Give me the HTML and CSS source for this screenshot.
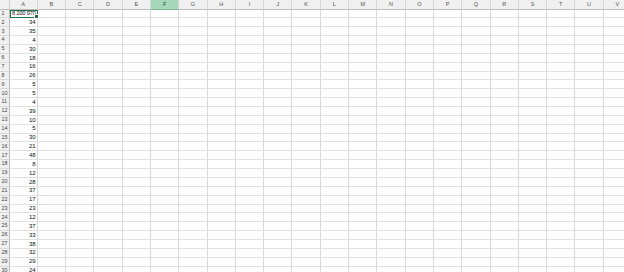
FILE: index.html
```html
<!DOCTYPE html>
<html>
<head>
<meta charset="utf-8">
<link rel="stylesheet" href="styles.css">
</head>
<body>
<div class="sheet">
<b class="corner"></b><b class="ch">A</b><b class="ch">B</b><b class="ch">C</b><b class="ch">D</b><b class="ch">E</b><b class="ch on">F</b><b class="ch">G</b><b class="ch">H</b><b class="ch">I</b><b class="ch">J</b><b class="ch">K</b><b class="ch">L</b><b class="ch">M</b><b class="ch">N</b><b class="ch">O</b><b class="ch">P</b><b class="ch">Q</b><b class="ch">R</b><b class="ch">S</b><b class="ch">T</b><b class="ch">U</b><b class="ch">V</b>
<b class="rh">1</b><span class="n sel">8 200 970</span><span></span><span></span><span></span><span></span><span></span><span></span><span></span><span></span><span></span><span></span><span></span><span></span><span></span><span></span><span></span><span></span><span></span><span></span><span></span><span></span><span></span>
<b class="rh">2</b><span class="n">34</span><span></span><span></span><span></span><span></span><span></span><span></span><span></span><span></span><span></span><span></span><span></span><span></span><span></span><span></span><span></span><span></span><span></span><span></span><span></span><span></span><span></span>
<b class="rh">3</b><span class="n">35</span><span></span><span></span><span></span><span></span><span></span><span></span><span></span><span></span><span></span><span></span><span></span><span></span><span></span><span></span><span></span><span></span><span></span><span></span><span></span><span></span><span></span>
<b class="rh">4</b><span class="n">4</span><span></span><span></span><span></span><span></span><span></span><span></span><span></span><span></span><span></span><span></span><span></span><span></span><span></span><span></span><span></span><span></span><span></span><span></span><span></span><span></span><span></span>
<b class="rh">5</b><span class="n">30</span><span></span><span></span><span></span><span></span><span></span><span></span><span></span><span></span><span></span><span></span><span></span><span></span><span></span><span></span><span></span><span></span><span></span><span></span><span></span><span></span><span></span>
<b class="rh">6</b><span class="n">18</span><span></span><span></span><span></span><span></span><span></span><span></span><span></span><span></span><span></span><span></span><span></span><span></span><span></span><span></span><span></span><span></span><span></span><span></span><span></span><span></span><span></span>
<b class="rh">7</b><span class="n">16</span><span></span><span></span><span></span><span></span><span></span><span></span><span></span><span></span><span></span><span></span><span></span><span></span><span></span><span></span><span></span><span></span><span></span><span></span><span></span><span></span><span></span>
<b class="rh">8</b><span class="n">26</span><span></span><span></span><span></span><span></span><span></span><span></span><span></span><span></span><span></span><span></span><span></span><span></span><span></span><span></span><span></span><span></span><span></span><span></span><span></span><span></span><span></span>
<b class="rh">9</b><span class="n">5</span><span></span><span></span><span></span><span></span><span></span><span></span><span></span><span></span><span></span><span></span><span></span><span></span><span></span><span></span><span></span><span></span><span></span><span></span><span></span><span></span><span></span>
<b class="rh">10</b><span class="n">5</span><span></span><span></span><span></span><span></span><span></span><span></span><span></span><span></span><span></span><span></span><span></span><span></span><span></span><span></span><span></span><span></span><span></span><span></span><span></span><span></span><span></span>
<b class="rh">11</b><span class="n">4</span><span></span><span></span><span></span><span></span><span></span><span></span><span></span><span></span><span></span><span></span><span></span><span></span><span></span><span></span><span></span><span></span><span></span><span></span><span></span><span></span><span></span>
<b class="rh">12</b><span class="n">39</span><span></span><span></span><span></span><span></span><span></span><span></span><span></span><span></span><span></span><span></span><span></span><span></span><span></span><span></span><span></span><span></span><span></span><span></span><span></span><span></span><span></span>
<b class="rh">13</b><span class="n">10</span><span></span><span></span><span></span><span></span><span></span><span></span><span></span><span></span><span></span><span></span><span></span><span></span><span></span><span></span><span></span><span></span><span></span><span></span><span></span><span></span><span></span>
<b class="rh">14</b><span class="n">5</span><span></span><span></span><span></span><span></span><span></span><span></span><span></span><span></span><span></span><span></span><span></span><span></span><span></span><span></span><span></span><span></span><span></span><span></span><span></span><span></span><span></span>
<b class="rh">15</b><span class="n">30</span><span></span><span></span><span></span><span></span><span></span><span></span><span></span><span></span><span></span><span></span><span></span><span></span><span></span><span></span><span></span><span></span><span></span><span></span><span></span><span></span><span></span>
<b class="rh">16</b><span class="n">21</span><span></span><span></span><span></span><span></span><span></span><span></span><span></span><span></span><span></span><span></span><span></span><span></span><span></span><span></span><span></span><span></span><span></span><span></span><span></span><span></span><span></span>
<b class="rh">17</b><span class="n">48</span><span></span><span></span><span></span><span></span><span></span><span></span><span></span><span></span><span></span><span></span><span></span><span></span><span></span><span></span><span></span><span></span><span></span><span></span><span></span><span></span><span></span>
<b class="rh">18</b><span class="n">8</span><span></span><span></span><span></span><span></span><span></span><span></span><span></span><span></span><span></span><span></span><span></span><span></span><span></span><span></span><span></span><span></span><span></span><span></span><span></span><span></span><span></span>
<b class="rh">19</b><span class="n">12</span><span></span><span></span><span></span><span></span><span></span><span></span><span></span><span></span><span></span><span></span><span></span><span></span><span></span><span></span><span></span><span></span><span></span><span></span><span></span><span></span><span></span>
<b class="rh">20</b><span class="n">28</span><span></span><span></span><span></span><span></span><span></span><span></span><span></span><span></span><span></span><span></span><span></span><span></span><span></span><span></span><span></span><span></span><span></span><span></span><span></span><span></span><span></span>
<b class="rh">21</b><span class="n">37</span><span></span><span></span><span></span><span></span><span></span><span></span><span></span><span></span><span></span><span></span><span></span><span></span><span></span><span></span><span></span><span></span><span></span><span></span><span></span><span></span><span></span>
<b class="rh">22</b><span class="n">17</span><span></span><span></span><span></span><span></span><span></span><span></span><span></span><span></span><span></span><span></span><span></span><span></span><span></span><span></span><span></span><span></span><span></span><span></span><span></span><span></span><span></span>
<b class="rh">23</b><span class="n">23</span><span></span><span></span><span></span><span></span><span></span><span></span><span></span><span></span><span></span><span></span><span></span><span></span><span></span><span></span><span></span><span></span><span></span><span></span><span></span><span></span><span></span>
<b class="rh">24</b><span class="n">12</span><span></span><span></span><span></span><span></span><span></span><span></span><span></span><span></span><span></span><span></span><span></span><span></span><span></span><span></span><span></span><span></span><span></span><span></span><span></span><span></span><span></span>
<b class="rh">25</b><span class="n">37</span><span></span><span></span><span></span><span></span><span></span><span></span><span></span><span></span><span></span><span></span><span></span><span></span><span></span><span></span><span></span><span></span><span></span><span></span><span></span><span></span><span></span>
<b class="rh">26</b><span class="n">33</span><span></span><span></span><span></span><span></span><span></span><span></span><span></span><span></span><span></span><span></span><span></span><span></span><span></span><span></span><span></span><span></span><span></span><span></span><span></span><span></span><span></span>
<b class="rh">27</b><span class="n">38</span><span></span><span></span><span></span><span></span><span></span><span></span><span></span><span></span><span></span><span></span><span></span><span></span><span></span><span></span><span></span><span></span><span></span><span></span><span></span><span></span><span></span>
<b class="rh">28</b><span class="n">32</span><span></span><span></span><span></span><span></span><span></span><span></span><span></span><span></span><span></span><span></span><span></span><span></span><span></span><span></span><span></span><span></span><span></span><span></span><span></span><span></span><span></span>
<b class="rh">29</b><span class="n">29</span><span></span><span></span><span></span><span></span><span></span><span></span><span></span><span></span><span></span><span></span><span></span><span></span><span></span><span></span><span></span><span></span><span></span><span></span><span></span><span></span><span></span>
<b class="rh">30</b><span class="n">24</span><span></span><span></span><span></span><span></span><span></span><span></span><span></span><span></span><span></span><span></span><span></span><span></span><span></span><span></span><span></span><span></span><span></span><span></span><span></span><span></span><span></span>
</div>
</body>
</html>
```
FILE: styles.css
```css
html, body {
  margin: 0;
  padding: 0;
  background: #ffffff;
  overflow: hidden;
}
body {
  width: 624px;
  height: 272px;
  font-family: "Liberation Sans", Arial, sans-serif;
}
.sheet {
  display: grid;
  grid-template-columns: 9.5px repeat(22, 28.3px);
  grid-template-rows: 9.6px;
  grid-auto-rows: 8.86px;
  width: 632px;
}
.sheet > b,
.sheet > span {
  box-sizing: border-box;
  font-weight: normal;
  font-size: 6px;
  line-height: 1;
  white-space: nowrap;
}
.sheet > span {
  border-right: 1px solid #d9d9d9;
  border-bottom: 1px solid #e1e1e1;
  color: #111;
  display: flex;
  align-items: flex-end;
  justify-content: flex-end;
  padding: 0 1.2px 1.2px 0;
}
.corner {
  background: #f0f0f0;
  border-right: 1px solid #cfcfcf;
  border-bottom: 1px solid #bdbdbd;
}
.ch {
  background: #f0f0f0;
  border-right: 1px solid #d6d6d6;
  border-bottom: 1px solid #bdbdbd;
  color: #555;
  display: flex;
  align-items: center;
  justify-content: center;
  padding-top: 1px;
  font-size: 5.6px !important;
}
.ch.on {
  background: #a6d8b9;
  color: #215a3a;
  border-bottom: 1px solid #7cb895;
}
.rh {
  grid-column: 1;
  background: #f0f0f0;
  border-right: 1px solid #bdbdbd;
  border-bottom: 1px solid #d9d9d9;
  color: #444;
  display: flex;
  align-items: center;
  padding-left: 1.5px;
  font-size: 5.4px !important;
}
.sel {
  position: relative;
  outline: 1.5px solid #217346;
  outline-offset: -1px;
  font-size: 5.7px !important;
  letter-spacing: -0.2px;
}
.sel::after {
  content: "";
  position: absolute;
  right: -2px;
  bottom: -2px;
  width: 3px;
  height: 3px;
  background: #217346;
  border: 0.5px solid #fff;
}
```
